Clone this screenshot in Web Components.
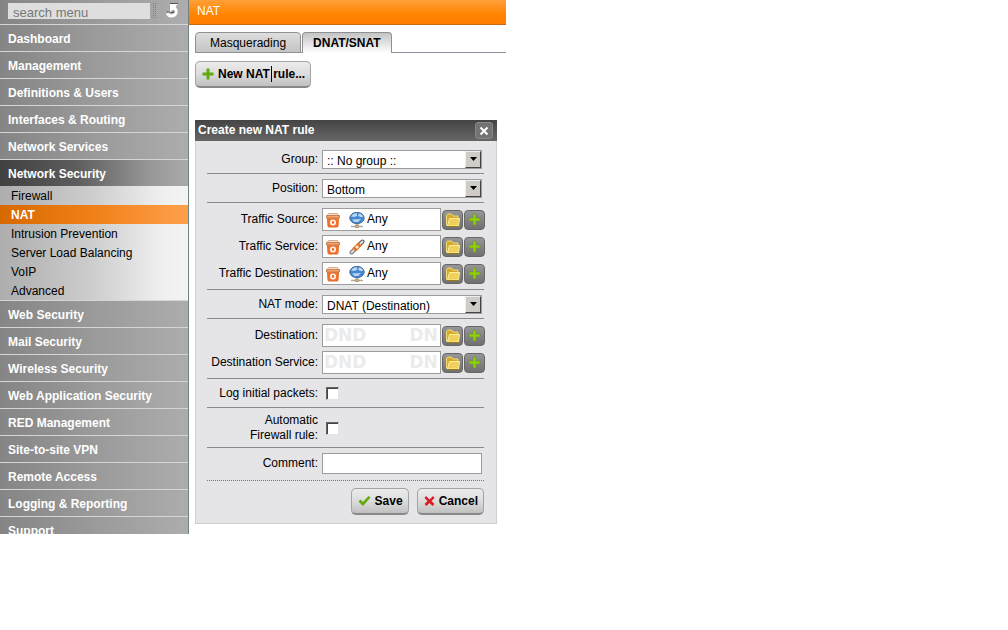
<!DOCTYPE html>
<html lang="en">
<head>
<meta charset="utf-8">
<title>NAT</title>
<style>
  body { margin: 0; background: #fff; color: #000; font: 12px/15px "Liberation Sans", Arial, sans-serif; }
</style>
</head>
<body>
<admin-shell>
  <side-menu slot="menu">
    <menu-item>Dashboard</menu-item>
    <menu-item>Management</menu-item>
    <menu-item>Definitions &amp; Users</menu-item>
    <menu-item>Interfaces &amp; Routing</menu-item>
    <menu-item>Network Services</menu-item>
    <menu-item open>Network Security
      <sub-item slot="sub">Firewall</sub-item>
      <sub-item slot="sub" current>NAT</sub-item>
      <sub-item slot="sub">Intrusion Prevention</sub-item>
      <sub-item slot="sub">Server Load Balancing</sub-item>
      <sub-item slot="sub">VoIP</sub-item>
      <sub-item slot="sub">Advanced</sub-item>
    </menu-item>
    <menu-item>Web Security</menu-item>
    <menu-item>Mail Security</menu-item>
    <menu-item>Wireless Security</menu-item>
    <menu-item>Web Application Security</menu-item>
    <menu-item>RED Management</menu-item>
    <menu-item>Site-to-site VPN</menu-item>
    <menu-item>Remote Access</menu-item>
    <menu-item>Logging &amp; Reporting</menu-item>
    <menu-item>Support</menu-item>
  </side-menu>
  <page-title>NAT</page-title>
  <tab-bar></tab-bar>
  <tool-bar><push-button icon="plus">New NAT<text-caret></text-caret>rule...</push-button></tool-bar>
  <rule-dialog heading="Create new NAT rule">
    <form-section first><select-field label="Group:" value=":: No group ::"></select-field></form-section>
    <form-section><select-field label="Position:" value="Bottom"></select-field></form-section>
    <form-section>
      <picker-field label="Traffic Source:" value="Any" icon="globe"></picker-field>
      <picker-field label="Traffic Service:" value="Any" icon="service"></picker-field>
      <picker-field label="Traffic Destination:" value="Any" icon="globe"></picker-field>
    </form-section>
    <form-section><select-field label="NAT mode:" value="DNAT (Destination)"></select-field></form-section>
    <form-section>
      <picker-field label="Destination:"></picker-field>
      <picker-field label="Destination Service:"></picker-field>
    </form-section>
    <form-section><check-field label="Log initial packets:"></check-field></form-section>
    <form-section><check-field label="Automatic Firewall&nbsp;rule:"></check-field></form-section>
    <form-section last><text-field label="Comment:"></text-field></form-section>
    <push-button slot="actions" icon="check">Save</push-button>
    <push-button slot="actions" icon="cross">Cancel</push-button>
  </rule-dialog>
</admin-shell>

<script>
const ICONS = {
  plus: `<svg width="12" height="12" viewBox="0 0 12 12"><path d="M4.500 0.500h3v4h4v3h-4v4h-3v-4h-4v-3h4z" fill="#62aa0c"/></svg>`,
  check: `<svg width="13" height="12" viewBox="0 0 13 12"><path d="M0.500 6.500L2.500 4.500L5 7L10.500 1L12.500 2.500L5 11z" fill="#62aa0c"/></svg>`,
  cross: `<svg width="11" height="12" viewBox="0 0 11 12"><path d="M2 1L5.500 4.500L9 1L10.500 3L7.500 6L10.500 9L8.500 11L5.500 8L2.500 11L0.500 9L3.500 6L0.500 3z" fill="#d81c24"/></svg>`,
  reload: `<svg width="14" height="16" viewBox="0 0 14 16"><path d="M5 .5h8" stroke="#555" fill="none"/><path d="M5 1h7.500L10.500 4C12.500 5.500 13 8 12.500 10C11.500 13.500 9 14.500 6.500 14.500C3.500 14.500 1.500 13 1 10.500L3.500 9.500C4.500 11.500 8 12 9 10C9.500 8.500 9 7 8 6.500L5 9z" fill="#fff"/><path d="M1.500 9h3M5.500 9.500h3.500v-2" stroke="#555" fill="none"/></svg>`,
  close: `<svg width="10" height="10" viewBox="0 0 10 10"><path d="M1.500 1.500L8.500 8.500M8.500 1.500L1.500 8.500" stroke="#fff" stroke-width="2" fill="none"/></svg>`,
  bin: `<svg width="14" height="16" viewBox="0 0 14 16"><path d="M1.500 5.500h11l-.5 8.500q0 1-1 1h-8q-1 0-1-1z" fill="#f4722a" stroke="#e06a28"/><path d="M2.500 1.500h9l1 2H1.500z" fill="#fde4d0" stroke="#d8a888"/><path d="M0.500 3.500h13v2.500h-13z" fill="#f8a468" stroke="#c08058"/><circle cx="7" cy="10.500" r="2.200" fill="none" stroke="#fff" stroke-width="1.500"/></svg>`,
  globe: `<svg width="16" height="16" viewBox="0 0 16 16"><path d="M8 11v3M2 14.500h12" stroke="#aaa" stroke-width="1.500"/><path d="M6.500 13h3v2.500h-3z" fill="#f0b050" stroke="#a98"/><ellipse cx="8" cy="6" rx="7.200" ry="5.700" fill="#4488d4" stroke="#4a6c98"/><path d="M2 4.500C4 1 7 1 8 1.500L8 4L5 5zM10 1.500c3 .5 4 2 4 3.500l-3 0-2-1.500zM3 7.500l9-.5-3 3-3.500 0z" fill="#b4d8f4"/></svg>`,
  service: `<svg width="16" height="16" viewBox="0 0 16 16"><path d="M2.500 13.500L6 10" stroke="#777" stroke-width="4" stroke-linecap="round"/><path d="M2.500 13.500L6 10" stroke="#ddd" stroke-width="2" stroke-linecap="round"/><path d="M10 6L13.500 2.500" stroke="#555" stroke-width="4" stroke-linecap="round"/><path d="M10 6L13.500 2.500" stroke="#e4e4e4" stroke-width="2" stroke-linecap="round"/><path d="M5 11L11 5" stroke="#e77524" stroke-width="5"/><path d="M7 9L9 7" stroke="#fce6d0" stroke-width="3"/></svg>`,
  folder: `<svg width="16" height="14" viewBox="0 0 16 14"><path d="M1.500 12.500V2.500L2.500 1h4l1.500 2H13v3" fill="#d5aa2c" stroke="#f5dc78"/><path d="M4.500 5.500h10l-1 7.500H2.500z" fill="#efd058" stroke="#fff0a0"/><path d="M2 13.500h11.500" stroke="#9b7a18"/></svg>`,
  add: `<svg width="13" height="13" viewBox="0 0 13 13"><path d="M5 1h3v4h4v3H8v4H5V8H1V5h4z" fill="#8ed008" stroke="#6b8e30" stroke-width=".6"/></svg>`,
  arrow: `<svg width="9" height="5" viewBox="0 0 9 5"><path d="M1 0h7L4.500 4z" fill="#000"/></svg>`
};

const BASE = `:host{display:block} *{box-sizing:border-box} svg{display:block;flex:none} button,input,select{font:inherit;color:inherit;margin:0}`;

function define(name, css, html) {
  customElements.define(name, class extends HTMLElement {
    constructor() {
      super();
      this.attachShadow({ mode: 'open' }).innerHTML =
        `<style>${BASE}${css}</style>${typeof html === 'function' ? html(this) : html}`;
    }
  });
}

define('admin-shell', `
  :host{display:grid;grid-template-columns:189px minmax(0,1fr);max-width:506px;max-height:534px;overflow:hidden}
  nav{min-height:0} main{min-width:0}`,
  `<nav><slot name="menu"></slot></nav><main><slot></slot></main>`);

define('side-menu', `
  :host{background:linear-gradient(90deg,#858585,#9a9a9a 50%,#adadad);border-right:1px solid #708080}
  .search{display:flex;align-items:flex-start;height:25px;padding:3px 9px 0 8px;border-bottom:1px solid #d4d6d4}
  input{flex:1;min-width:0;height:16px;padding:3px 5px 0;border:0;border-radius:0;background:#dedede;font-size:13px;color:#707070}
  input::placeholder{color:#777;opacity:1}
  i{width:3px;height:15px;margin:0 9px 0 3px;border:1px dotted #808080;border-width:0 1px}
  button{padding:0;border:0;background:none}`,
  `<div class="search"><input type="search" aria-label="search menu" placeholder="search menu"><i></i><button aria-label="Reset search">${ICONS.reload}</button></div><slot></slot>`);

define('menu-item', `
  a{display:block;height:27px;padding:7px 8px 0;border-bottom:1px solid #d4d6d4;color:#fff;font-weight:bold;text-decoration:none;white-space:nowrap}
  :host([open]) a{height:26px;border:0;background:linear-gradient(90deg,#404040,#5c5c5c 40%,#989898 80%,#aaa)}
  :host([open]) .sub{border-bottom:1px solid #d4d6d4;background:linear-gradient(90deg,#adadad,#cecece 50%,#eee 85%,#f4f4f4)}`,
  `<a href="#"><slot></slot></a><div class="sub"><slot name="sub"></slot></div>`);

define('sub-item', `
  a{display:block;height:19px;padding:3px 11px 0;color:#000;text-decoration:none;white-space:nowrap}
  :host([current]) a{background:linear-gradient(90deg,#d86800,#f08018 50%,#ffa04c);color:#fff;font-weight:bold}`,
  `<a href="#"><slot></slot></a>`);

define('page-title', `
  h1{height:25px;margin:0;padding:4px 8px;border-bottom:1px solid #c46a10;background:linear-gradient(#ffa038,#ff8400 60%,#ff7c00);color:#fff;font:inherit}`,
  `<h1><slot></slot></h1>`);

define('tab-bar', `
  :host{display:flex;height:21px;margin:7px 0 0 6px;gap:1px;box-shadow:inset 0 -1px #8c8c9c}
  button{padding:1px 14px 0;border:1px solid #909094;border-radius:4px 4px 0 0;background:linear-gradient(#dedede,#c4c4c4);white-space:nowrap}
  .on{padding:1px 10px 0;border-bottom:0;background:linear-gradient(#c4c4c4,#fff);font-weight:bold}`,
  `<button>Masquerading</button><button class="on">DNAT/SNAT</button>`);

define('tool-bar', `:host{padding:8px 0 0 6px}`, `<slot></slot>`);

define('text-caret', `
  :host{display:inline;position:relative;white-space:pre}
  :host::after{content:"";position:absolute;left:1px;top:-1px;width:1px;height:16px;background:#000}`, ` `);

define('push-button', `
  :host{display:inline-block;vertical-align:top}
  button{display:flex;align-items:center;gap:4px;height:27px;padding:0 5px 0 6px;border:1px solid #a4a4a4;border-bottom:2px solid #888;border-radius:5px;background:linear-gradient(#ececec,#dcdcdc 50%,#c0c0c0);font-weight:bold;white-space:nowrap}`,
  el => `<button type="button">${ICONS[el.getAttribute('icon')]}<span><slot></slot></span></button>`);

define('rule-dialog', `
  :host{margin:32px 9px 0 6px;border:1px solid #d0d0d0;border-top:0;background:#e5e4e7}
  header{display:flex;align-items:center;justify-content:space-between;height:21px;margin:0 -1px;padding:0 4px 0 3px;background:linear-gradient(#444,#666);color:#fff}
  h2{margin:0;font:inherit;font-weight:bold}
  header button{display:grid;place-items:center;width:18px;height:17px;padding:0;border:1px solid #888;border-radius:3px;background:#737373}
  form{padding:0 12px 0 11px}
  footer{display:flex;justify-content:flex-end;gap:8px;padding:7px 0 8px}`,
  el => `<header><h2>${el.getAttribute('heading')}</h2><button type="button" aria-label="Close">${ICONS.close}</button></header>
  <form><slot></slot><footer><slot name="actions"></slot></footer></form>`);

define('form-section', `
  :host{display:grid;gap:4px;padding:5px 0 4px;border-bottom:1px solid #8c8890}
  :host([first]){padding-top:9px}
  :host([last]){padding-bottom:6px;border-bottom:1px dotted #777}`, `<slot></slot>`);

const FIELD = `
  :host{display:grid;grid-template-columns:111px minmax(0,1fr);column-gap:4px;align-items:center}
  label,.label{justify-self:end;text-align:right;white-space:nowrap}`;

define('select-field', `${FIELD}
  .box{position:relative;margin-right:2px}
  select{display:block;width:100%;height:19px;padding:3px 20px 0 4px;border:1px solid #9c9c9c;border-radius:0;background:#fff;appearance:none}
  .arrow{position:absolute;top:1px;right:1px;display:grid;place-items:center;width:16px;height:17px;border:1px solid;border-color:#eee #444 #444 #eee;background:#cfccc8;pointer-events:none}`,
  el => `<label for="c">${el.getAttribute('label')}</label>
  <div class="box"><select id="c"><option>${el.getAttribute('value')}</option></select><span class="arrow">${ICONS.arrow}</span></div>`);

define('picker-field', `${FIELD}
  .line{display:flex;align-items:center;gap:1px;margin-right:-1px}
  .box{flex:1;min-width:0;height:23px;display:flex;align-items:center;padding:0 3px;border:1px solid #9c9c9c;background:#fff;overflow:hidden}
  .box svg + svg{margin:0 2px 0 9px}
  .hint{display:flex;gap:43px;margin-left:-2px;font:bold 17px/21px "DejaVu Sans",sans-serif;color:#ebebeb}
  button{display:grid;place-items:center;width:21px;height:20px;padding:0;border:1px solid #666;border-radius:4px;background:linear-gradient(#969696,#707070)}`,
  el => `<span class="label" id="l">${el.getAttribute('label')}</span>
  <div class="line" role="group" aria-labelledby="l"><div class="box">${el.hasAttribute('value')
    ? `${ICONS.bin}${ICONS[el.getAttribute('icon')]}<span>${el.getAttribute('value')}</span>`
    : `<div class="hint"><span>DND</span><span>DN</span></div>`}</div>
  <button type="button" aria-label="Browse">${ICONS.folder}</button><button type="button" aria-label="Add">${ICONS.add}</button></div>`);

define('check-field', `${FIELD}
  :host{min-height:19px}
  label{white-space:normal}
  input{appearance:none;width:13px;height:13px;margin-left:4px;border:1px solid;border-color:#666 #e4e4e4 #e4e4e4 #666;box-shadow:inset 1px 1px #444;background:#fff}`,
  el => `<label for="c">${el.getAttribute('label')}</label><input id="c" type="checkbox">`);

define('text-field', `${FIELD}
  .box{margin-right:2px}
  input{display:block;width:100%;height:21px;padding:0 4px;border:1px solid #9c9c9c;border-radius:0;background:#fff}`,
  el => `<label for="c">${el.getAttribute('label')}</label><div class="box"><input id="c" type="text"></div>`);
</script>
</body>
</html>
